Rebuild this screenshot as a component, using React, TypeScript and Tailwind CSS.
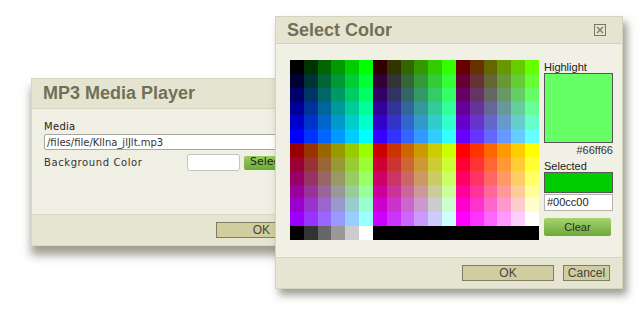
import React from "react";

const steps = ["00", "33", "66", "99", "cc", "ff"];

function buildPalette() {
  const cells: string[] = [];
  // two bands of 6 rows, each band has three red blocks of 6 columns
  for (let band = 0; band < 2; band++) {
    for (let b = 0; b < 6; b++) {
      for (let block = 0; block < 3; block++) {
        const r = steps[band * 3 + block];
        for (let g = 0; g < 6; g++) {
          cells.push(`#${r}${steps[g]}${steps[b]}`);
        }
      }
    }
  }
  // grey row then black
  for (let i = 0; i < 18; i++) {
    cells.push(i < 6 ? `#${steps[i]}${steps[i]}${steps[i]}` : "#000000");
  }
  return cells;
}

const palette = buildPalette();

function CloseIcon() {
  return (
    <svg width="12" height="12" viewBox="0 0 12 12" className="block">
      <rect x="0.5" y="0.5" width="11" height="11" fill="none" stroke="#77775e" strokeWidth="1" />
      <path d="M3 3 L9 9 M9 3 L3 9" stroke="#77775e" strokeWidth="1.2" />
    </svg>
  );
}

function MediaDialog() {
  return (
    <div className="absolute left-[31px] top-[78px] flex h-[168px] w-[262px] flex-col border border-[#d9d8c2] bg-[#f0efe3] shadow-[0_9px_9px_rgba(60,60,40,0.5)]">
      <div className="flex h-[30px] items-center border-b border-[#d6d5bf] bg-[#e5e4d0] px-[11px]">
        <span className="font-['Liberation_Sans',Arial,sans-serif] text-[18px] font-bold text-[#707057]">MP3 Media Player</span>
      </div>
      <div className="flex flex-1 flex-col px-[12px] pt-[12px] font-['DejaVu_Sans',Verdana,sans-serif] text-[10px] text-[#222]">
        <span className="leading-[12px] tracking-[0.3px]">Media</span>
        <div className="mt-[1px] flex h-[16px] items-center rounded-[2px] border border-[#a8a8a0] bg-white px-[2px] text-[10px] text-[#333]">
          /files/file/Kllna_jlJlt.mp3
        </div>
        <div className="mt-[4px] flex items-center">
          <span className="w-[143px] shrink-0 tracking-[0.6px] text-[#333]">Background Color</span>
          <div className="h-[17px] w-[53px] shrink-0 rounded-[3px] border border-[#c4c4bc] bg-white" />
          <div className="ml-[4px] flex h-[14px] w-[60px] shrink-0 items-center rounded-[2px] bg-gradient-to-b from-[#9acb5e] to-[#6aab34] pl-[6px] text-[11px] text-[#222]">
            Select
          </div>
        </div>
      </div>
      <div className="flex h-[31px] items-center border-t border-[#d8d7c0] bg-[#e6e5d1] pl-[184px]">
        <div className="flex h-[16px] w-[60px] items-center justify-end border border-[#7f7e62] bg-[#d0ce9e] pr-[5px] font-['Liberation_Sans',Arial,sans-serif] text-[12px] text-[#444]">
          OK
        </div>
      </div>
    </div>
  );
}

function ColorDialog() {
  return (
    <div className="absolute left-[275px] top-[16px] flex h-[273px] w-[348px] flex-col border border-[#d4d3bb] bg-[#f1f0e5] shadow-[4px_6px_8px_rgba(60,60,40,0.5)]">
      <div className="flex h-[27px] items-center justify-between border-b border-[#d3d2bb] bg-[#e5e4d0] pl-[11px] pr-[16px]">
        <span className="font-['Liberation_Sans',Arial,sans-serif] text-[18px] font-bold text-[#707057]">Select Color</span>
        <CloseIcon />
      </div>
      <div className="flex flex-1 pl-[14px] pt-[16px]">
        <div className="grid h-[180px] w-[249px] grid-cols-18 grid-rows-13">
          {palette.map((c, i) => (
            <div key={i} style={{ backgroundColor: c }} />
          ))}
        </div>
        <div className="ml-[5px] flex w-[69px] flex-col font-['Liberation_Sans',Arial,sans-serif] text-[11px] text-[#222]">
          <span className="mt-[1px] leading-[12px]">Highlight</span>
          <div className="h-[70px] w-[69px] border border-[#555] bg-[#66ff66]" />
          <span className="mt-[1px] text-right leading-[12px] text-[#333]">#66ff66</span>
          <span className="mt-[4px] leading-[12px]">Selected</span>
          <div className="h-[21px] w-[69px] border border-[#555] bg-[#00cc00]" />
          <div className="mt-[1px] flex h-[17px] w-[69px] items-center border border-[#b5b5ad] bg-white px-[2px] text-[#222]">
            #00cc00
          </div>
          <div className="mt-[7px] flex h-[18px] w-[67px] items-center justify-center rounded-[2px] bg-gradient-to-b from-[#a6d36e] to-[#6ea838] text-[#2a2a2a]">
            Clear
          </div>
        </div>
      </div>
      <div className="flex h-[31px] items-center border-t border-[#d6d5be] bg-[#e6e5d1] pl-[186px]">
        <div className="flex h-[16px] w-[92px] items-center justify-center border border-[#7f7e62] bg-[#d0ce9e] font-['Liberation_Sans',Arial,sans-serif] text-[12px] text-[#444]">
          OK
        </div>
        <div className="ml-[9px] flex h-[16px] w-[47px] items-center justify-center border border-[#7f7e62] bg-[#d0ce9e] font-['Liberation_Sans',Arial,sans-serif] text-[12px] text-[#444]">
          Cancel
        </div>
      </div>
    </div>
  );
}

export default function App() {
  return (
    <div className="relative h-[332px] w-[640px] overflow-hidden bg-white">
      <MediaDialog />
      <ColorDialog />
    </div>
  );
}
